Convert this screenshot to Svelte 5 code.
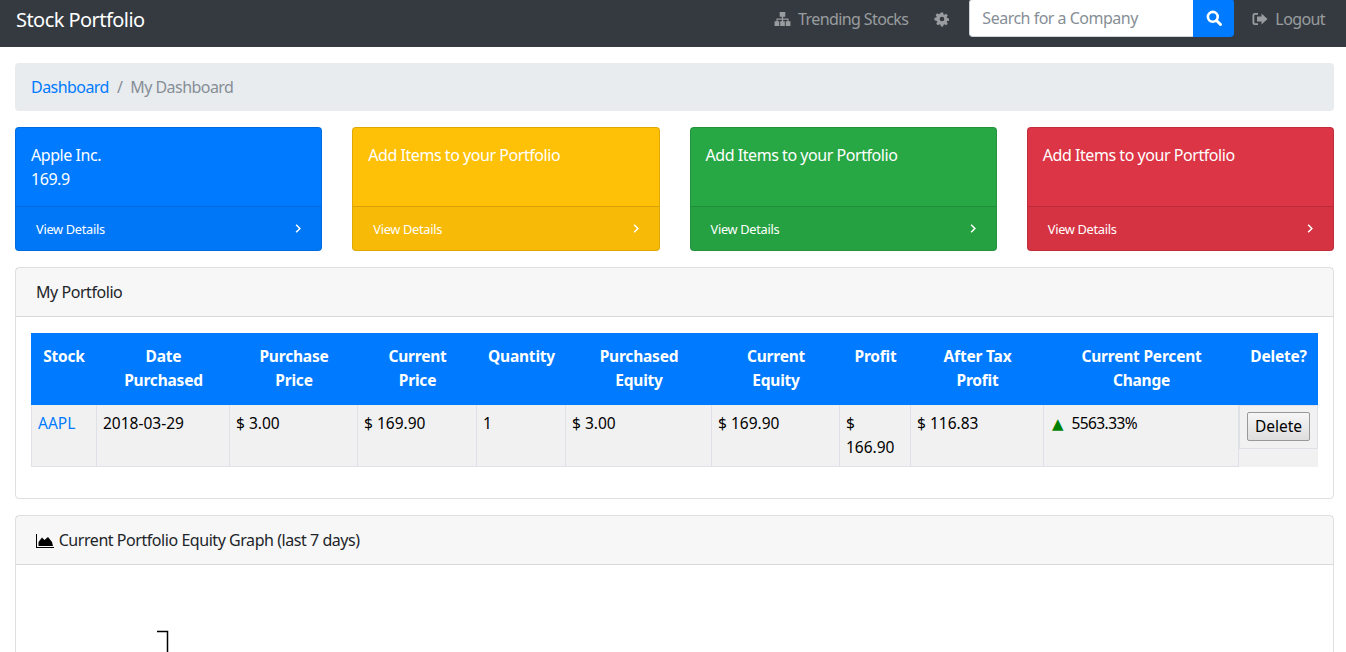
<script>
    const tiles = [
        { color: "blue", lines: ["Apple Inc.", "169.9"] },
        { color: "yellow", lines: ["Add Items to your Portfolio"] },
        { color: "green", lines: ["Add Items to your Portfolio"] },
        { color: "red", lines: ["Add Items to your Portfolio"] }
    ];

    const headers = [
        ["Stock", "c1"],
        ["Date\nPurchased", "c2"],
        ["Purchase\nPrice", "c3"],
        ["Current\nPrice", "c4"],
        ["Quantity", "c5"],
        ["Purchased\nEquity", "c6"],
        ["Current\nEquity", "c7"],
        ["Profit", "c8"],
        ["After Tax\nProfit", "c9"],
        ["Current Percent\nChange", "c10"],
        ["Delete?", "c11"]
    ];
</script>

<nav class="navbar">
    <a href="/" class="brand">Stock Portfolio</a>
    <div class="nav-right">
        <a href="/" class="nav-link">
            <svg class="icon sitemap" viewBox="0 0 17 15"><path d="M5.500 0h6v5H9.200v2H15v3h2v5h-5v-5h1.800V8.200H9.200V10H11v5H6v-5h1.800V8.200H3.200V10H5v5H0v-5h2V7h5.800V5H5.500z" /></svg>
            Trending Stocks
        </a>
        <a href="/" class="nav-link cog" aria-label="Settings">
            <svg class="icon" viewBox="0 0 24 24"><path fill-rule="evenodd" d="M10 1h4l.6 3.200 1.700.7 2.700-1.800 2.900 2.900-1.800 2.700.7 1.700 3.200.6v4l-3.200.6-.7 1.700 1.800 2.700-2.900 2.900-2.700-1.800-1.700.7-.6 3.200h-4l-.6-3.200-1.700-.7-2.700 1.800-2.900-2.900 1.800-2.700-.7-1.700L-1 14v-4l3.200-.6.7-1.700-1.800-2.700L4 2.100l2.700 1.800 1.700-.7zM12 8a4 4 0 1 0 0 8 4 4 0 0 0 0-8z" /></svg>
        </a>
        <form class="search" on:submit|preventDefault>
            <input type="text" placeholder="Search for a Company" />
            <button type="submit" aria-label="Search">
                <svg viewBox="0 0 16 16" width="16" height="16"><circle cx="6.800" cy="6.800" r="4.900" fill="none" stroke="#fff" stroke-width="2.600" /><path d="M10.500 10.500l4 4" stroke="#fff" stroke-width="3" stroke-linecap="round" /></svg>
            </button>
        </form>
        <a href="/" class="nav-link logout">
            <svg class="icon" viewBox="0 0 16 14"><path d="M6 1H3a2.500 2.500 0 0 0-2.500 2.500v7A2.500 2.500 0 0 0 3 13h3v-1.800H3a.7.7 0 0 1-.7-.7v-7a.7.7 0 0 1 .7-.7h3z" /><path d="M9.500 1.500L15.500 7l-6 5.500V9.500H5v-5h4.500z" /></svg>
            Logout
        </a>
    </div>
</nav>

<main class="content">
    <ol class="breadcrumb">
        <li><a href="/">Dashboard</a></li>
        <li class="sep">/</li>
        <li class="active">My Dashboard</li>
    </ol>

    <div class="tiles">
        {#each tiles as tile}
            <div class="tile {tile.color}">
                <div class="tile-body">
                    {#each tile.lines as line}
                        <div>{line}</div>
                    {/each}
                </div>
                <a href="/" class="tile-footer">
                    <span>View Details</span>
                    <svg viewBox="0 0 8 12" width="6" height="9"><path d="M1.500 1l5 5-5 5" fill="none" stroke="#fff" stroke-width="2" /></svg>
                </a>
            </div>
        {/each}
    </div>

    <section class="card">
        <header class="card-header">My Portfolio</header>
        <div class="card-body">
            <table>
                <thead>
                    <tr>
                        {#each headers as [label, col]}
                            <th class={col}>{label}</th>
                        {/each}
                    </tr>
                </thead>
                <tbody>
                    <tr>
                        <td><a href="/">AAPL</a></td>
                        <td>2018-03-29</td>
                        <td>$ 3.00</td>
                        <td>$ 169.90</td>
                        <td>1</td>
                        <td>$ 3.00</td>
                        <td>$ 169.90</td>
                        <td>$ 166.90</td>
                        <td>$ 116.83</td>
                        <td><span class="up">▲</span><span class="pct">5563.33%</span></td>
                        <td class="delete-cell">
                            <div class="delete-box"><button type="button">Delete</button></div>
                        </td>
                    </tr>
                </tbody>
            </table>
        </div>
    </section>

    <section class="card graph">
        <header class="card-header">
            <svg class="area" viewBox="0 0 18 14" width="18" height="14"><path d="M0 0h1v13h17v1H0z" fill="#000" /><path d="M2.500 12V8L6 3.500 8.500 6 12 3l4 5 1 4z" fill="#000" /></svg>
            Current Portfolio Equity Graph (last 7 days)
        </header>
        <div class="chart">
            <svg width="1286" height="400"><path d="M126 11.500h10.500V400" fill="none" stroke="#000" stroke-width="1.500" /></svg>
        </div>
    </section>
</main>

<style>
    :global(html), :global(body) {
        overflow: hidden;
        height: 100%;
    }

    :global(body) {
        font-family: "Noto Sans", "Open Sans", sans-serif;
        font-size: 16px;
        line-height: 24px;
        color: #212529;
        background: #fff;
    }

    a {
        text-decoration: none;
        color: #007bff;
    }

    .navbar {
        height: 47px;
        background: #343a40;
        display: flex;
        justify-content: space-between;
        padding: 0 21px 10px 16px;
        box-sizing: border-box;
        align-items: center;
    }

    .brand {
        color: #fff;
        font-size: 20px;
        line-height: 30px;
        letter-spacing: -0.55px;
        margin-top: 2px;
    }

    .nav-right {
        display: flex;
        align-items: center;
    }

    .nav-link {
        color: rgba(255, 255, 255, 0.5);
        display: flex;
        align-items: center;
        gap: 7px;
        letter-spacing: -0.6px;
    }

    .icon {
        width: 16px;
        height: 14px;
        fill: rgba(255, 255, 255, 0.5);
    }

    .sitemap {
        width: 17px;
        margin-left: -1px;
    }

    .cog {
        margin-left: 27px;
    }

    .cog .icon {
        width: 14px;
        height: 14px;
        overflow: visible;
    }

    .search {
        display: flex;
        margin: 0 0 1px 20px;
        height: 38px;
    }

    .search input {
        width: 224px;
        box-sizing: border-box;
        border: 1px solid #ced4da;
        border-right: 0;
        border-radius: 4px 0 0 4px;
        padding: 0 12px;
        font: inherit;
        letter-spacing: -0.5px;
        outline: none;
    }

    .search input::placeholder {
        color: #868e96;
    }

    .search button {
        width: 41px;
        border: 0;
        background: #007bff;
        border-radius: 0 4px 4px 0;
        padding: 0;
        display: flex;
        align-items: center;
        justify-content: center;
    }

    .logout {
        margin-left: 18px;
    }

    .content {
        padding: 16px 12px 0 15px;
    }

    .breadcrumb {
        list-style: none;
        margin: 0 0 16px;
        padding: 12px 16px;
        background: #e9ecef;
        border-radius: 4px;
        display: flex;
        gap: 8px;
        letter-spacing: -0.55px;
    }

    .sep,
    .active {
        color: #868e96;
    }

    .tiles {
        display: flex;
        gap: 30px;
        margin-bottom: 16px;
    }

    .tile {
        flex: 1;
        border: 1px solid rgba(0, 0, 0, 0.125);
        border-radius: 4px;
        color: #fff;
    }

    .blue { background-color: #007bff; }
    .yellow { background-color: #ffc107; }
    .green { background-color: #28a745; }
    .red { background-color: #dc3545; }

    .tile-body {
        height: 78px;
        box-sizing: border-box;
        padding: 15px 15px;
        letter-spacing: -0.45px;
    }

    .tile-footer {
        display: flex;
        justify-content: space-between;
        align-items: center;
        height: 44px;
        box-sizing: border-box;
        padding: 0 20px;
        color: #fff;
        font-size: 12.8px;
        letter-spacing: -0.3px;
        background: rgba(0, 0, 0, 0.03);
        border-top: 1px solid rgba(0, 0, 0, 0.125);
    }

    .card {
        border: 1px solid rgba(0, 0, 0, 0.125);
        border-radius: 4px;
        margin-bottom: 16px;
    }

    .card-header {
        background: rgba(0, 0, 0, 0.03);
        border-bottom: 1px solid rgba(0, 0, 0, 0.125);
        padding: 12px 20px;
        letter-spacing: -0.45px;
    }

    .card-body {
        padding: 16px 15px 31px;
    }

    table {
        width: 100%;
        table-layout: fixed;
        border-collapse: separate;
        border-spacing: 0;
        font-size: 15.5px;
    }

    th {
        box-sizing: border-box;
        background: #007bff;
        color: #fff;
        padding: 11px 7px 13px;
        font-weight: 700;
        font-size: 15.5px;
        letter-spacing: -0.2px;
        line-height: 24px;
        text-align: center;
        vertical-align: top;
        white-space: pre-line;
    }

    td {
        background: #f1f1f1;
        border: solid #dee2e6;
        border-width: 0 1px 1px 0;
        padding: 6px 7px 7px 6px;
        vertical-align: top;
        color: #000;
    }

    td:first-child {
        border-left-width: 1px;
    }

    .c1 { width: 66px; }
    .c2 { width: 133px; }
    .c3 { width: 128px; }
    .c4 { width: 119px; }
    .c5 { width: 89px; }
    .c6 { width: 146px; }
    .c7 { width: 128px; }
    .c8 { width: 71px; }
    .c9 { width: 133px; }
    .c10 { width: 195px; }
    .c11 { width: 79px; }

    .up {
        color: green;
        font-family: "DejaVu Sans", sans-serif;
        font-size: 15px;
        margin: 0 8px 0 2px;
    }

    .pct {
        letter-spacing: -0.6px;
    }

    td.delete-cell {
        padding: 0;
        border: 0;
    }

    .delete-box {
        border: 1px solid #dee2e6;
        height: 44px;
        box-sizing: border-box;
        padding: 6px 7px;
    }

    .delete-box button {
        display: block;
        width: 63px;
        height: 29px;
        padding: 0;
        font: inherit;
        font-size: 15.5px;
        line-height: 1;
        color: #000;
        border: 1px solid #999;
        border-radius: 2px;
        background: linear-gradient(#f6f6f6, #dedede);
    }

    .area {
        vertical-align: -2px;
        margin-right: 1px;
    }

    .chart {
        height: 400px;
    }

    .chart svg {
        display: block;
        margin: 55px 0 0 15px;
    }
</style>
